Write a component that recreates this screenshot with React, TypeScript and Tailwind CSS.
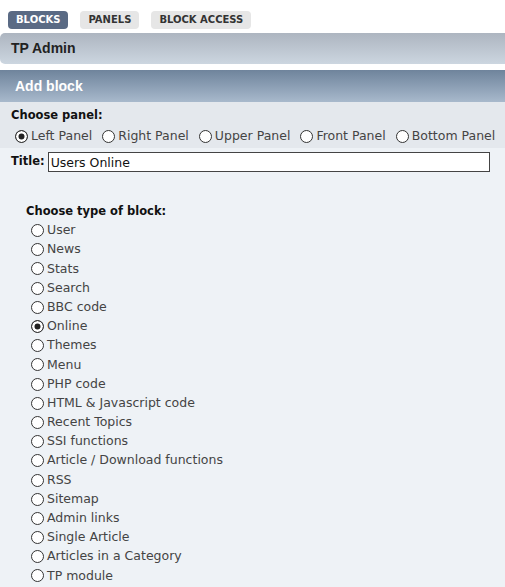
import React, { FC, useState } from "react";

const blockTypes = [
  "User",
  "News",
  "Stats",
  "Search",
  "BBC code",
  "Online",
  "Themes",
  "Menu",
  "PHP code",
  "HTML & Javascript code",
  "Recent Topics",
  "SSI functions",
  "Article / Download functions",
  "RSS",
  "Sitemap",
  "Admin links",
  "Single Article",
  "Articles in a Category",
  "TP module",
];

const panels = ["Left Panel", "Right Panel", "Upper Panel", "Front Panel", "Bottom Panel"];

const radioCls =
  "appearance-none m-0 w-[13px] h-[13px] shrink-0 rounded-full border border-[#333] bg-white checked:bg-[#222] checked:shadow-[inset_0_0_0_2.5px_white]";

const App: FC = () => {
  const [panel, setPanel] = useState("Left Panel");
  const [type, setType] = useState("Online");
  const [title, setTitle] = useState("Users Online");

  return (
    <div className="w-[505px] h-[587px] overflow-hidden bg-white font-['DejaVu_Sans',Verdana,sans-serif] text-[12.5px] text-[#444]">
      {/* tabs */}
      <div className="flex items-center gap-3 pl-2 pt-[6px] h-[33px]">
        <span className="h-[18px] px-[8px] flex items-center rounded-[4px] bg-[#5a6a84] text-white text-[10px] font-bold">BLOCKS</span>
        <span className="h-[18px] px-[8px] flex items-center rounded-[4px] bg-[#e6e6e6] text-[#333] text-[10px] font-bold">PANELS</span>
        <span className="h-[18px] px-[8px] flex items-center rounded-[4px] bg-[#e6e6e6] text-[#333] text-[10px] font-bold">BLOCK ACCESS</span>
      </div>

      {/* TP Admin bar */}
      <div className="h-[31px] flex items-center pl-[11px] rounded-l-[5px] bg-gradient-to-b from-[#adb5c0] to-[#ccd6e0] text-[#222] text-[14px] font-bold font-['Liberation_Sans',Arial,sans-serif]">
        TP Admin
      </div>

      <div className="h-[6px]" />

      {/* Add block */}
      <div className="h-[32px] flex items-center pl-[15px] bg-gradient-to-b from-[#6f849c] to-[#a8b9cc] text-white text-[14px] font-bold font-['Liberation_Sans',Arial,sans-serif]">
        Add block
      </div>

      <div className="bg-[#e4e8ed] pl-[11px] pt-[4px] h-[46px]">
        <div className="font-bold text-[11.5px] text-[#111] leading-[18px]">Choose panel:</div>
        <div className="flex items-center mt-[3px] pl-[4px] gap-[10px]">
          {panels.map((p) => (
            <label key={p} className="flex items-center gap-[3px]">
              <input type="radio" name="panel" className={radioCls} checked={panel === p} onChange={() => setPanel(p)} />
              <span>{p}</span>
            </label>
          ))}
        </div>
      </div>

      <div className="bg-[#eef2f6] h-full">
        <div className="flex items-center pl-[11px] pt-[4px] gap-[3px]">
          <span className="font-bold text-[11.5px] text-[#111]">Title:</span>
          <input
            value={title}
            onChange={(e) => setTitle(e.target.value)}
            className="w-[442px] h-[20px] border border-[#444] bg-white px-[2px] text-[12.5px] text-[#111] outline-none"
          />
        </div>

        <div className="pl-[26px] pt-[30px]">
          <div className="font-bold text-[11.5px] text-[#111] leading-[18px]">Choose type of block:</div>
          <div className="flex flex-col pl-[5px] mt-[1px]">
            {blockTypes.map((b) => (
              <label key={b} className="flex items-center gap-[3px] h-[19.2px]">
                <input type="radio" name="type" className={radioCls} checked={type === b} onChange={() => setType(b)} />
                <span>{b}</span>
              </label>
            ))}
          </div>
        </div>
      </div>
    </div>
  );
};

export default App;
